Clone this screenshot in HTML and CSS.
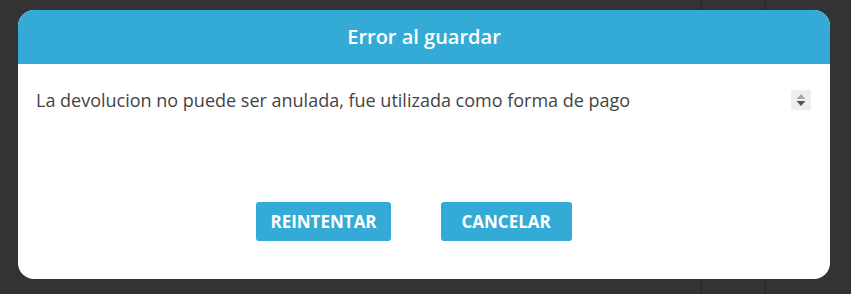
FILE: index.html
```html
<!DOCTYPE html>
<html lang="es">
<head>
    <meta charset="UTF-8">
    <meta name="viewport" content="width=device-width, initial-scale=1.0">
    <title>Error al guardar</title>
    <link rel="stylesheet" href="styles.css">
</head>
<body>
    <div class="dialog">
        <div class="dialog-header">Error al guardar</div>
        <div class="dialog-body">
            <div class="message-row">
                <p class="message">La devolucion no puede ser anulada, fue utilizada como forma de pago</p>
                <span class="spinner">
                    <svg width="20" height="20" viewBox="0 0 20 20">
                        <polygon points="10,4 14.5,9 5.5,9" fill="#a8a8a8"/>
                        <polygon points="5.5,11 14.5,11 10,16" fill="#555"/>
                    </svg>
                </span>
            </div>
            <div class="actions">
                <button class="btn">REINTENTAR</button>
                <button class="btn">CANCELAR</button>
            </div>
        </div>
    </div>
</body>
</html>
```

FILE: styles.css
```css
body {
    margin: 0;
    padding: 10px 18px;
    height: 294px;
    box-sizing: border-box;
    font-family: "Open Sans", Arial, sans-serif;
    background-color: #333;
    background-image: linear-gradient(to right, transparent 700px, #2b2b2b 700px, #2b2b2b 702px, transparent 702px, transparent 764px, #2b2b2b 764px, #2b2b2b 766px, transparent 766px);
}
.dialog {
    width: 812px;
    height: 269px;
    background: #fff;
    border-radius: 16px;
    overflow: hidden;
    display: flex;
    flex-direction: column;
}
.dialog-header {
    height: 54px;
    line-height: 54px;
    background: #33abd6;
    color: #fff;
    text-align: center;
    font-size: 20px;
    font-weight: 600;
}
.dialog-body {
    flex: 1;
    display: flex;
    flex-direction: column;
    padding: 24px 19px 38px 18px;
}
.message-row {
    display: flex;
    align-items: center;
    justify-content: space-between;
}
.message {
    margin: 0;
    font-size: 18px;
    color: #444;
    line-height: 24px;
}
.spinner {
    width: 20px;
    height: 20px;
    background: #eee;
    display: block;
}
.spinner svg {
    display: block;
}
.actions {
    margin-top: auto;
    display: flex;
    justify-content: center;
    gap: 50px;
    padding-right: 19px;
}
.btn {
    height: 39px;
    min-width: 131px;
    padding: 0 14px;
    border: none;
    border-radius: 3px;
    background: #33abd6;
    color: #fff;
    font-family: "Open Sans", Arial, sans-serif;
    font-size: 17px;
    font-weight: 700;
    cursor: pointer;
}
```
